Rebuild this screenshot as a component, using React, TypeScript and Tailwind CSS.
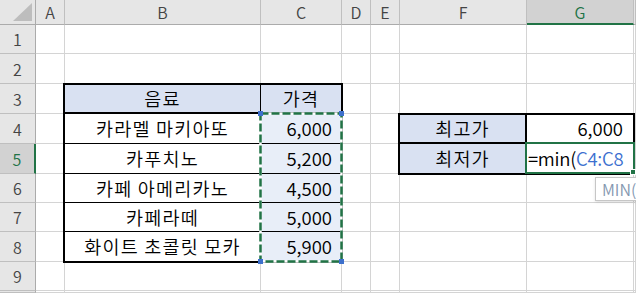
import React from 'react';

const colStart = ['col-start-1', 'col-start-2', 'col-start-3', 'col-start-4', 'col-start-5', 'col-start-6', 'col-start-7', 'col-start-8', 'col-start-9'];
const rowStart = ['row-start-1', 'row-start-2', 'row-start-3', 'row-start-4', 'row-start-5', 'row-start-6', 'row-start-7', 'row-start-8', 'row-start-9', 'row-start-10', 'row-start-11'];
const letters = ['', 'A', 'B', 'C', 'D', 'E', 'F', 'G', ''];

const drinks = ['카라멜 마키아또', '카푸치노', '카페 아메리카노', '카페라떼', '화이트 초콜릿 모카'];
const prices = ['6,000', '5,200', '4,500', '5,000', '5,900'];

function cellStyle(r: number, c: number) {
  // column headers
  if (r === 0) {
    if (c === 0) return 'bg-[#e6e6e6] border-r border-b border-r-[#ababab] border-b-[#ababab]';
    if (c === 7) return 'bg-[#d2d2d2] border-r border-b-2 border-r-[#bfbfbf] border-b-[#217346] text-[#217346] justify-center';
    return 'bg-[#e6e6e6] border-r border-b border-r-[#bfbfbf] border-b-[#ababab] text-[#444] justify-center';
  }
  // row headers
  if (c === 0) {
    if (r === 5) return 'bg-[#d2d2d2] border-r-2 border-b border-r-[#217346] border-b-[#bfbfbf] text-[#217346] justify-center';
    return 'bg-[#e6e6e6] border-r border-b border-r-[#ababab] border-b-[#bfbfbf] text-[#444] justify-center';
  }
  // drinks table B3:C8
  if (r >= 3 && r <= 8 && (c === 2 || c === 3)) {
    const bottom = r === 3 ? 'border-b-2' : 'border-b';
    const bg = r === 3 ? 'bg-[#d9e1f2]' : c === 3 ? 'bg-[#e8eef8]' : 'bg-white';
    const align = c === 3 && r > 3 ? 'justify-end pr-[9px]' : 'justify-center';
    return `${bg} border-r ${bottom} border-r-black border-b-black ${align}`;
  }
  // price summary F4:G5
  if ((r === 4 || r === 5) && (c === 6 || c === 7)) {
    const right = c === 6 ? 'border-r-2' : 'border-r';
    const bottom = r === 4 ? 'border-b-2' : 'border-b';
    const bg = c === 6 ? 'bg-[#d9e1f2] justify-center' : r === 4 ? 'bg-white justify-end pr-[10px]' : 'bg-white justify-start pl-[1px]';
    return `${bg} ${right} ${bottom} border-r-black border-b-black`;
  }
  return 'bg-white border-r border-b border-r-[#d4d4d4] border-b-[#d4d4d4]';
}

function Hangul({ children }: { children: React.ReactNode }) {
  return <span className="tracking-[1.2px] whitespace-nowrap">{children}</span>;
}

function cellText(r: number, c: number): React.ReactNode {
  if (r === 0) {
    if (c === 0) {
      return (
        <svg width="35" height="24" className="self-end">
          <polygon points="13,21 32,21 32,3" fill="#bdbdbd" />
        </svg>
      );
    }
    return letters[c];
  }
  if (c === 0) return r <= 9 ? String(r) : '';
  if (r === 3 && c === 2) return <Hangul>음료</Hangul>;
  if (r === 3 && c === 3) return <Hangul>가격</Hangul>;
  if (r >= 4 && r <= 8 && c === 2) return <Hangul>{drinks[r - 4]}</Hangul>;
  if (r >= 4 && r <= 8 && c === 3) return prices[r - 4];
  if (r === 4 && c === 6) return <Hangul>최고가</Hangul>;
  if (r === 5 && c === 6) return <Hangul>최저가</Hangul>;
  if (r === 4 && c === 7) return '6,000';
  if (r === 5 && c === 7) {
    return (
      <span className="whitespace-nowrap tracking-[-0.3px]">
        =min(<span className="text-[#3c6fcf]">C4:C8</span>
      </span>
    );
  }
  return null;
}

export default function App() {
  const rows = Array.from({ length: 11 }, (_, r) => r);
  const cols = Array.from({ length: 9 }, (_, c) => c);

  return (
    <div className="w-[636px] h-[293px] overflow-hidden bg-white font-['Noto_Sans_CJK_KR','Noto_Sans',sans-serif] font-[350] text-[18.5px] leading-none text-black grid grid-cols-[36px_29px_196px_81px_29px_29px_127px_107px_1fr] grid-rows-[25px_29px_30px_30px_30px_30px_29px_29px_30px_29px_1fr]">
      {rows.map((r) =>
        cols.map((c) => (
          <div
            key={`${r}-${c}`}
            className={`${colStart[c]} ${rowStart[r]} flex items-center overflow-hidden ${r === 0 || c === 0 ? 'text-[16px]' : ''} ${cellStyle(r, c)}`}
          >
            {cellText(r, c)}
          </div>
        ))
      )}

      {/* thick outline of B3:C8 */}
      <div className="col-start-3 col-end-5 row-start-4 row-end-10 -ml-[2px] -mr-[1px] -mt-[1px] -mb-[1px] border-2 border-black pointer-events-none" />

      {/* thick outline of F4:G5 */}
      <div className="col-start-7 col-end-9 row-start-5 row-end-7 -ml-[2px] -mr-[1px] -mt-[1px] -mb-[1px] border-2 border-black pointer-events-none" />

      {/* formula reference marquee on C4:C8 */}
      <div className="col-start-4 row-start-5 self-start justify-self-start -ml-[3px] -mt-[3px] w-[86px] h-[154px] pointer-events-none">
        <svg width="86" height="154">
          <rect x="2.5" y="2.5" width="81" height="148" fill="none" stroke="#ffffff" strokeWidth="2.5" />
          <rect x="2.5" y="2.5" width="81" height="148" fill="none" stroke="#217346" strokeWidth="2.5" strokeDasharray="8 3" />
          <rect x="0" y="0" width="5" height="5" fill="#3d70cc" />
          <rect x="81" y="0" width="5" height="5" fill="#3d70cc" />
          <rect x="0" y="148" width="5" height="5" fill="#3d70cc" />
          <rect x="81" y="148" width="5" height="5" fill="#3d70cc" />
        </svg>
      </div>

      {/* active cell G5 */}
      <div className="col-start-8 row-start-6 self-start justify-self-start -ml-[2px] -mt-[2px] w-[110px] h-[32px] border-2 border-[#217346] relative pointer-events-none">
        <div className="absolute -right-[3px] -bottom-[3px] w-[6px] h-[6px] bg-[#217346] border border-white" />
      </div>

      {/* function tooltip */}
      <div className="col-start-8 col-end-10 row-start-7 self-start justify-self-start ml-[68px] mt-[3px] h-[24px] flex items-center border border-[#c6c6c6] bg-white pl-[6px] pr-[20px] text-[16px] text-[#8497b0] shadow-sm">
        MIN(
      </div>
    </div>
  );
}
